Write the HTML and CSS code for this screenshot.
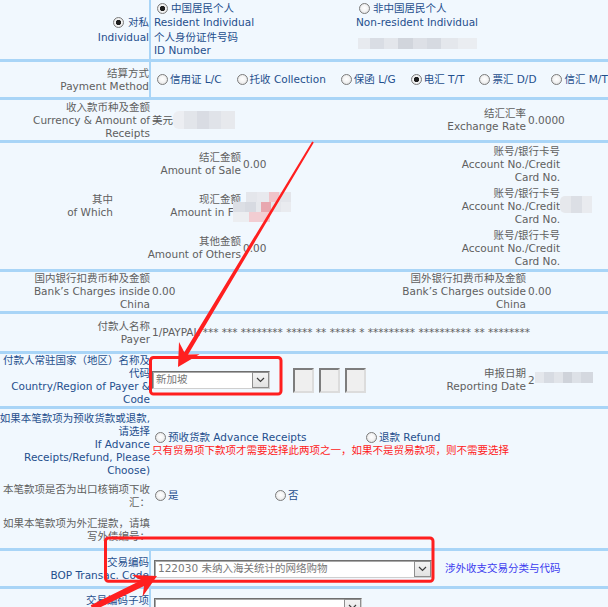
FILE: index.html
```html
<!DOCTYPE html>
<html lang="zh-CN">
<head>
<meta charset="utf-8">
<title>涉外收入申报单</title>
<link rel="stylesheet" href="styles.css">
</head>
<body>
<div class="form">

  <div class="row split edged r1">
    <div class="lab edge blue"><div><label class="opt-in"><input class="rd" type="radio" name="kind" checked>对私</label><br>Individual</div></div>
    <div class="r1-body">
      <div class="r1-col c1 blue">
        <label class="line14"><input class="rd" type="radio" name="res" checked>中国居民个人</label>
        <div class="line14">Resident Individual</div>
        <div class="idlab">个人身份证件号码<br>ID Number</div>
      </div>
      <div class="r1-col c2 blue">
        <label class="line14"><input class="rd" type="radio" name="res">非中国居民个人</label>
        <div class="line14">Non-resident Individual</div>
        <span class="mosaic m-id"></span>
      </div>
    </div>
  </div>

  <div class="row split edged r2">
    <div class="lab edge"><div>结算方式<br>Payment Method</div></div>
    <div class="opts blue">
      <label class="opt"><input class="rd" type="radio" name="pm">信用证 L/C</label>
      <label class="opt"><input class="rd" type="radio" name="pm">托收 Collection</label>
      <label class="opt"><input class="rd" type="radio" name="pm">保函 L/G</label>
      <label class="opt"><input class="rd" type="radio" name="pm" checked>电汇 T/T</label>
      <label class="opt"><input class="rd" type="radio" name="pm">票汇 D/D</label>
      <label class="opt"><input class="rd" type="radio" name="pm">信汇 M/T</label>
    </div>
  </div>

  <div class="row quad r3">
    <div class="lab"><div>收入款币种及金额<br>Currency &amp; Amount of<br>Receipts</div></div>
    <div class="val"><span class="dark">美元</span><span class="mosaic m-amt"></span></div>
    <div class="lab"><div>结汇汇率<br>Exchange Rate</div></div>
    <div class="val">0.0000</div>
  </div>

  <div class="row r4">
    <div class="lab which"><div>其中<br>of Which</div></div>

    <div class="lab"><div>结汇金额<br>Amount of Sale</div></div>
    <div class="val">0.00</div>
    <div class="lab"><div>账号/银行卡号<br>Account No./Credit<br>Card No.</div></div>
    <div class="val nopad"></div>

    <div class="lab"><div>现汇金额<br>Amount in FX</div></div>
    <div class="val fx"><span class="mosaic m-fx"></span></div>
    <div class="lab"><div>账号/银行卡号<br>Account No./Credit<br>Card No.</div></div>
    <div class="val nopad"><span class="mosaic m-acct"></span></div>

    <div class="lab"><div>其他金额<br>Amount of Others</div></div>
    <div class="val">0.00</div>
    <div class="lab"><div>账号/银行卡号<br>Account No./Credit<br>Card No.</div></div>
    <div class="val nopad"></div>
  </div>

  <div class="row quad r5">
    <div class="lab"><div>国内银行扣费币种及金额<br>Bank’s Charges inside<br>China</div></div>
    <div class="val">0.00</div>
    <div class="lab"><div>国外银行扣费币种及金额<br>Bank’s Charges outside<br>China</div></div>
    <div class="val">0.00</div>
  </div>

  <div class="row split r6">
    <div class="lab"><div>付款人名称<br>Payer</div></div>
    <div class="val">1/PAYPAL *** *** ******** ***** ** ***** * ********* ********** ** ********</div>
  </div>

  <div class="row quad r7">
    <div class="lab blue"><div>付款人常驻国家（地区）名称及<br>代码<br>Country/Region of Payer &amp;<br>Code</div></div>
    <div class="val">
      <div class="sel sel-country"><span class="sel-text">新加坡</span><span class="sel-btn"><svg width="9" height="6" viewBox="0 0 9 6"><path d="M1 1l3.5 3.5L8 1" fill="none" stroke="#3c3c3c" stroke-width="1.2"/></svg></span></div>
      <div class="boxes"><span class="box"></span><span class="box"></span><span class="box"></span></div>
    </div>
    <div class="lab"><div>申报日期<br>Reporting Date</div></div>
    <div class="val"><span>2</span><span class="mosaic m-date"></span></div>
  </div>

  <div class="row r8">
    <div class="lab blue"><div>如果本笔款项为预收货款或退款,<br>请选择<br>If Advance<br>Receipts/Refund, Please<br>Choose)</div></div>
    <div class="adv">
      <div class="adv-opts blue">
        <label class="opt w-adv"><input class="rd" type="radio" name="adv">预收货款 Advance Receipts</label>
        <label class="opt"><input class="rd" type="radio" name="adv">退款 Refund</label>
      </div>
      <div class="warn">只有贸易项下款项才需要选择此两项之一，如果不是贸易款项，则不需要选择</div>
    </div>
    <div class="lab"><div>本笔款项是否为出口核销项下收<br>汇：</div></div>
    <div class="adv-opts yn blue">
      <label class="opt w-yes"><input class="rd" type="radio" name="yn">是</label>
      <label class="opt"><input class="rd" type="radio" name="yn">否</label>
    </div>
    <div class="lab"><div>如果本笔款项为外汇提款，请填<br>写外债编号：</div></div>
    <div></div>
  </div>

  <div class="row split edged r9">
    <div class="lab edge blue"><div>交易编码<br>BOP Transac. Code</div></div>
    <div class="val">
      <div class="sel sel-bop"><span class="sel-text">122030 未纳入海关统计的网络购物</span><span class="sel-btn"><svg width="9" height="6" viewBox="0 0 9 6"><path d="M1 1l3.5 3.5L8 1" fill="none" stroke="#3c3c3c" stroke-width="1.2"/></svg></span></div>
      <a class="link" href="#">涉外收支交易分类与代码</a>
    </div>
  </div>

  <div class="row split edged r10">
    <div class="lab edge blue"><div>交易编码子项<br>Sub-item</div></div>
    <div class="val">
      <div class="sel sel-sub"><span class="sel-text"></span><span class="sel-btn"><svg width="9" height="6" viewBox="0 0 9 6"><path d="M1 1l3.5 3.5L8 1" fill="none" stroke="#3c3c3c" stroke-width="1.2"/></svg></span></div>
    </div>
  </div>

</div>

<svg class="marks" width="608" height="607" viewBox="0 0 608 607" aria-hidden="true">
  <rect x="150.5" y="357.5" width="130.5" height="36.5" rx="3" fill="none" stroke="#ff1f1f" stroke-width="3"/>
  <rect x="105.5" y="538" width="327.5" height="43.3" rx="3" fill="none" stroke="#ff1f1f" stroke-width="3"/>
  <polygon fill="#ff1f1f" points="313.8,142.5 188.1,354.4 199.6,354.3 178,367 179,341.9 184.3,352.2 312.2,141.5"/>
  <polygon fill="#ff1f1f" points="93.3,610.7 144,586 142.6,596.5 157,576 132,574.9 141.2,580.2 90.7,605.3"/>
</svg>
</body>
</html>
```
FILE: styles.css
```css
* { box-sizing: border-box; }
html, body { margin: 0; }
body {
  background: #f1f8fe;
  font-family: "DejaVu Sans", "Noto Sans CJK SC", sans-serif;
  font-size: 10.5px;
  line-height: 13px;
  color: #5f5f5f;
  width: 608px;
  height: 607px;
  overflow: hidden;
  position: relative;
}
.form { width: 608px; }

.row {
  display: grid;
  border-bottom: 3px solid #a9d5f7;
  white-space: nowrap;
}
.split { grid-template-columns: 150px 1fr; }
.split.edged { grid-template-columns: 151px 1fr; }
.quad { grid-template-columns: 150px 226px 150px 1fr; }

.lab {
  display: flex;
  align-items: center;
  justify-content: flex-end;
  text-align: right;
  min-width: 0;
}
.edge { border-right: 2px solid #a9d5f7; }
.val {
  display: flex;
  align-items: center;
  padding-left: 2px;
  min-width: 0;
}
.val.nopad { padding-left: 0; }
.blue { color: #1f4f8d; }
.dark { color: #555; }

/* radios */
.rd {
  appearance: none;
  -webkit-appearance: none;
  width: 11px;
  height: 11px;
  margin: 0 2px 0 3px;
  border: 1px solid #7c7c7c;
  border-radius: 50%;
  background: radial-gradient(circle at 50% 45%, #ffffff 0, #f4f4f4 45%, #d6d6d6 100%);
  vertical-align: -1px;
  flex: none;
}
.rd:checked {
  background: radial-gradient(circle at 50% 50%, #1e1e1e 0, #1e1e1e 2.3px, #f6f6f6 3px, #d6d6d6 100%);
}
.opt { display: inline-flex; align-items: center; margin-right: 12px; }
.opt-in { display: inline-flex; align-items: center; }
.opt-in .rd { margin-right: 4px; }

/* row heights (incl. 3px separator) */
.r1 { height: 62px; }
.r2 { height: 38px; }
.r3 { height: 43px; }
.r4 { height: 129px; grid-template-columns: 113px 128px 199px 120px 48px; grid-template-rows: repeat(3, 42px); }
.r5 { height: 42px; }
.r6 { height: 40px; }
.r7 { height: 55px; }
.r8 { height: 142px; grid-template-columns: 150px 1fr; grid-template-rows: 70px 33px 36px; }
.r9 { height: 38px; }
.r10 { height: 38px; }

/* row 1 */
.r1-body { display: flex; padding: 1px 0 0 3px; }
.r1-col { display: flex; flex-direction: column; align-items: flex-start; }
.c1 { width: 203px; }
.c2 { margin-left: -1px; }
.line14 { line-height: 14px; display: flex; align-items: center; }
.c1 .line14 .rd, .c2 .line14 .rd { margin-left: 3px; margin-right: 3px; }
.idlab { margin-top: 2px; }

/* row 2 */
.opts { display: flex; align-items: center; padding-left: 3px; }

/* row 4 */
.which { grid-row: 1 / span 3; }
.fx { position: relative; }
.m-fx { position: absolute; left: -8px; top: 7px; }

/* row 7 */
.boxes { display: flex; gap: 5px; margin-left: 23px; }
.box {
  width: 21px;
  height: 25px;
  border: 2px solid;
  border-color: #7d7d7d #dcdcdc #dcdcdc #7d7d7d;
  background: #efefef;
}

/* selects */
.sel {
  display: flex;
  height: 18px;
  border: 1px solid;
  border-color: #6f6f6f #cfcfcf #cfcfcf #6f6f6f;
  background: #fff;
  box-shadow: inset 1px 1px 0 #a8a8a8;
}
.sel-text { flex: 1; padding-left: 3px; line-height: 15px; color: #777; overflow: hidden; }
.sel-btn {
  width: 17px;
  display: flex;
  align-items: center;
  justify-content: center;
  background: linear-gradient(#f3f3f3, #e2e2e2);
  border: 1px solid #8e8e8e;
}
.sel-country { width: 118px; }
.sel-bop { width: 278px; margin-left: 1px; }
.sel-sub { width: 208px; margin-left: 1px; margin-top: 1px; }
.link { color: #3b3bef; text-decoration: none; margin-left: 13px; }

/* row 8 */
.adv { display: flex; flex-direction: column; justify-content: center; padding-left: 2px; }
.adv-opts { display: flex; align-items: center; padding-left: 2px; }
.adv .adv-opts { padding-left: 0; }
.w-adv { width: 211px; margin-right: 0; }
.w-yes { width: 120px; margin-right: 0; }
.warn { color: #ff1a1a; }

/* blurred values */
.mosaic { display: inline-block; flex: none; }
.m-id {
  width: 119px; height: 11px; margin-top: 9px; margin-left: 2px;
  background: linear-gradient(90deg, #e7eaef 0 10%, #d9dde4 10% 22%, #e3e6eb 22% 34%, #d1d5dc 34% 46%, #dde0e6 46% 58%, #d6dae1 58% 70%, #e4e7ec 70% 84%, #eaedf1 84%);
}
.m-amt {
  width: 62px; height: 18px; border-radius: 6px 0 0 6px;
  background: linear-gradient(90deg, #eceef2 0 18%, #e2e5ea 18% 38%, #d9dce3 38% 58%, #e0e3e9 58% 78%, #e7e9ed 78%);
}
.m-fx {
  width: 58px; height: 30px;
  background:
    linear-gradient(90deg, transparent 0 22%, #e4e6eb 22% 42%, #e8e9ee 42% 62%, #f0c4ca 62% 80%, #e3e5ea 80%) 0 0 / 100% 10px no-repeat,
    linear-gradient(90deg, #dcdfe5 0 20%, #d7dae1 20% 40%, #e6e8ec 40% 48%, #e8a7af 48% 66%, #e4e6eb 66% 82%, #e9ebef 82%) 0 10px / 100% 10px no-repeat,
    linear-gradient(90deg, #eceef1 0 28%, #f2cdd2 28% 64%, transparent 64%) 0 20px / 100% 10px no-repeat;
}
.m-acct {
  width: 32px; height: 17px; border-radius: 5px 0 0 5px; margin-top: -4px;
  background: linear-gradient(90deg, #e6e8ec 0 35%, #dcdfe5 35% 70%, #e9ebef 70%);
}
.m-date {
  width: 58px; height: 11px; margin-top: -6px;
  background: linear-gradient(90deg, #e4e7ec 0 16%, #d7dbe2 16% 32%, #e1e4e9 32% 48%, #cfd3da 48% 64%, #dde1e7 64% 80%, #d4d8df 80%);
}

/* annotation overlay */
.marks { position: absolute; left: 0; top: 0; pointer-events: none; }
```
